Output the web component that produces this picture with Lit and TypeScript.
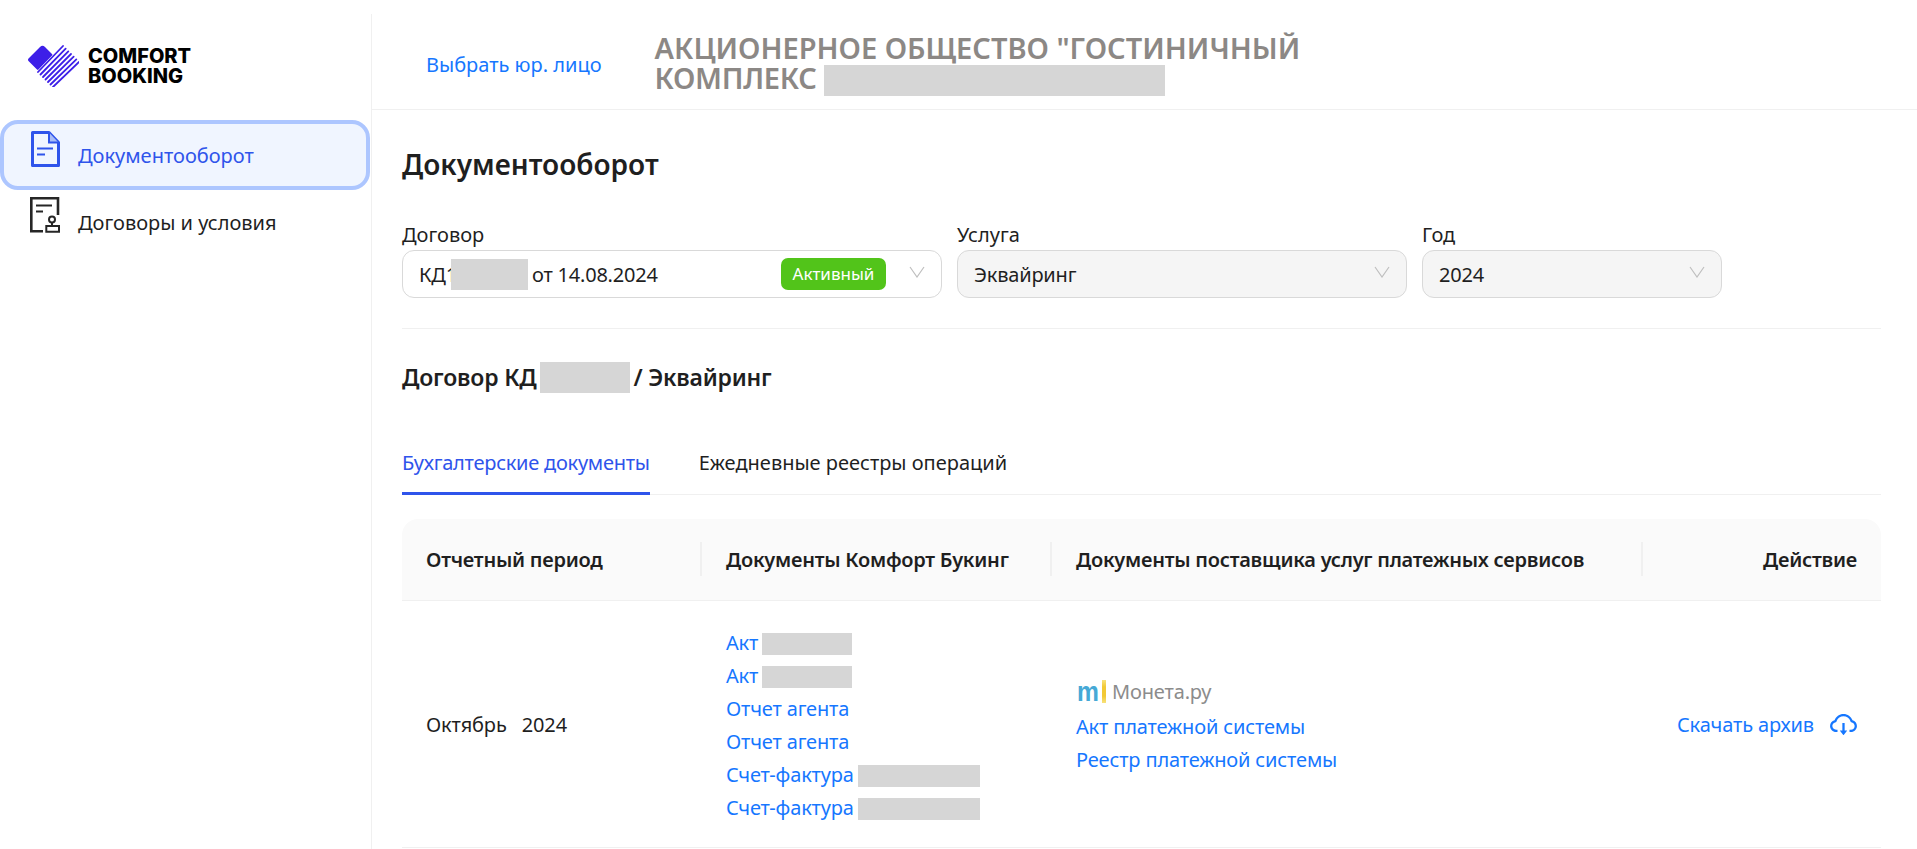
import { LitElement, html, css, svg } from "lit";
import { customElement } from "lit/decorators.js";

const cloudPaths = [
  "M624 706.3h-74.1V464c0-4.4-3.6-8-8-8h-60c-4.4 0-8 3.6-8 8v242.3H400c-6.7 0-10.4 7.7-6.3 12.9l112 141.7a8 8 0 0012.6 0l112-141.7c4.1-5.2.4-12.9-6.3-12.9z",
  "M811.4 366.7C765.6 245.9 648.9 160 512.2 160S258.8 245.8 213 366.6C127.3 389.1 64 467.2 64 560c0 110.5 89.5 200 199.9 200H304c4.4 0 8-3.6 8-8v-60c0-4.4-3.6-8-8-8h-40.1c-33.7 0-65.4-13.4-89-37.7-23.5-24.2-36-56.8-34.9-90.6.9-26.4 9.9-51.2 26.2-72.1 16.7-21.3 40.1-36.8 66.1-43.7l37.9-9.9 13.9-36.6c8.6-22.8 20.6-44.1 35.7-63.4a245.6 245.6 0 0152.4-49.9c41.1-28.9 89.5-44.2 140-44.2s98.9 15.3 140 44.2c19.9 14 37.5 30.8 52.4 49.9 15.1 19.3 27.1 40.6 35.7 63.4l13.8 36.5 37.8 10C846.1 454.5 884 503.8 884 560c0 33.1-12.9 64.3-36.3 87.7a123.07 123.07 0 01-87.6 36.3H720c-4.4 0-8 3.6-8 8v60c0 4.4 3.6 8 8 8h40.1C870.5 760 960 670.5 960 560c0-92.7-63.1-170.7-148.6-193.3z",
];

// stripes of the right lobe, spaced evenly across the rotated rectangle
const stripes = [0, 1, 2, 3, 4, 5, 6].map((i) => {
  const t = i / 6;
  return { x1: 11 + 15 * t, y1: 27 + 15 * t, x2: 36 + 16 * t, y2: 1 + 16 * t };
});

const chevron = html`<svg class="chevron" viewBox="0 0 16 12" width="16" height="12" fill="none" stroke="#bfbfbf" stroke-width="1.2">
  <path d="M1 1l7 10 7-10" />
</svg>`;

@customElement("app-root")
export class AppRoot extends LitElement {
  static styles = css`
    :host {
      display: flex;
      height: 849px;
      overflow: hidden;
      background: #fff;
      color: #1f1f1f;
      font-family: "Noto Sans", "Open Sans", sans-serif;
      font-size: 20px;
    }

    .redact {
      display: inline-block;
      background: #d6d6d6;
      vertical-align: middle;
    }

    aside {
      flex: 0 0 372px;
      box-sizing: border-box;
      margin-top: 14px;
      border-right: 1px solid #f0f0f0;
      padding-top: 31px;
    }

    .logo {
      display: flex;
      align-items: center;
      gap: 9px;
      padding-left: 27px;
      height: 42px;
      margin-bottom: 33px;
    }

    .logo-text {
      font-family: Inter, sans-serif;
      font-weight: 800;
      font-size: 20px;
      line-height: 20px;
      color: #000;
    }

    .nav {
      display: flex;
      align-items: center;
      gap: 18px;
      box-sizing: border-box;
      width: 370px;
      height: 64px;
      padding-left: 26px;
      border: 4px solid transparent;
    }

    .nav svg {
      flex: none;
      margin-top: -14px;
    }

    .nav.active {
      height: 70px;
      background: #f0f5ff;
      border-color: #adc6ff;
      border-radius: 18px;
      color: #2f54eb;
    }

    .nav.active svg {
      margin-top: -12px;
    }

    main {
      flex: 1;
      min-width: 0;
    }

    header {
      display: flex;
      align-items: center;
      gap: 53px;
      box-sizing: border-box;
      height: 110px;
      padding: 20px 0 0 54px;
      border-bottom: 1px solid #f0f0f0;
    }

    .link {
      color: #1677ff;
    }

    .org {
      width: 660px;
      font-size: 29px;
      font-weight: 600;
      line-height: 30px;
      color: #8c8885;
    }

    .org .tight {
      letter-spacing: -0.3px;
    }

    .org .redact {
      width: 341px;
      height: 31px;
    }

    .content {
      padding: 0 36px 0 30px;
    }

    h1 {
      margin: 34px 0 0;
      font-size: 28px;
      font-weight: 600;
      line-height: 40px;
    }

    .filters {
      display: grid;
      grid-template-columns: 540px 450px 300px;
      gap: 15px;
      margin-top: 37px;
      padding-bottom: 30px;
      border-bottom: 1px solid #f0f0f0;
    }

    label {
      display: block;
      line-height: 28px;
      margin-bottom: 1px;
    }

    .select {
      display: flex;
      align-items: center;
      box-sizing: border-box;
      height: 48px;
      padding: 0 16px;
      border: 1px solid #d9d9d9;
      border-radius: 12px;
    }

    .select.disabled {
      background: #f5f5f5;
    }

    .select .value {
      display: flex;
      align-items: center;
      flex: 1;
      white-space: nowrap;
      letter-spacing: -0.2px;
    }

    .select .redact {
      width: 77px;
      height: 31px;
      margin: 0 4px 0 -6px;
    }

    .chevron {
      flex: none;
      margin-top: -4px;
    }

    .badge {
      flex: none;
      box-sizing: border-box;
      width: 105px;
      height: 32px;
      margin-right: 23px;
      border-radius: 7px;
      background: #52c41a;
      color: #fff;
      font-size: 17px;
      line-height: 32px;
      text-align: center;
    }

    h2 {
      display: flex;
      align-items: center;
      margin: 32px 0 0;
      font-size: 23px;
      font-weight: 600;
      line-height: 32px;
      letter-spacing: -0.2px;
      white-space: nowrap;
    }

    h2 .redact {
      width: 90px;
      height: 31px;
      margin: 0 4px 0 3px;
    }

    .tabs {
      display: flex;
      gap: 49px;
      margin-top: 48px;
      border-bottom: 1px solid #f0f0f0;
    }

    .tab {
      line-height: 44px;
      padding-bottom: 7px;
      margin-bottom: -1px;
      border-bottom: 3px solid transparent;
    }

    .tab.active {
      color: #2f54eb;
      border-bottom-color: #2f54eb;
      letter-spacing: -0.25px;
    }

    .table {
      display: grid;
      grid-template-columns: 300px 350px 1fr 238px;
      margin-top: 24px;
    }

    .th {
      position: relative;
      box-sizing: border-box;
      height: 82px;
      padding: 0 24px;
      background: #fafafa;
      border-bottom: 1px solid #f0f0f0;
      font-weight: 600;
      line-height: 82px;
      letter-spacing: -0.25px;
      white-space: nowrap;
    }

    .th:first-child {
      border-top-left-radius: 16px;
    }

    .th:nth-child(4) {
      border-top-right-radius: 16px;
      text-align: right;
    }

    .th:not(:nth-child(4))::after {
      content: "";
      position: absolute;
      right: 0;
      top: 23px;
      width: 2px;
      height: 34px;
      background: #f0f0f0;
    }

    .td {
      box-sizing: border-box;
      display: flex;
      flex-direction: column;
      justify-content: center;
      height: 247px;
      padding: 23px 24px 22px;
      border-bottom: 1px solid #f0f0f0;
      line-height: 33px;
      letter-spacing: -0.15px;
      white-space: pre;
    }

    .td .link .redact {
      height: 22px;
      margin-left: 4px;
    }

    .provider {
      padding-left: 24px;
    }

    .moneta {
      display: flex;
      align-items: center;
      height: 37px;
      padding-left: 1px;
      color: #8c8c8c;
    }

    .moneta .m {
      width: 25px;
      font-family: "Liberation Sans", sans-serif;
      font-size: 28px;
      font-weight: 700;
      line-height: 23px;
      color: #46a9d6;
      transform: scaleX(0.88);
      transform-origin: left center;
    }

    .moneta .bar {
      width: 4px;
      height: 23px;
      margin-right: 6px;
      background: linear-gradient(#f8e27c, #f2c935 30%, #f2c935 70%, #f8e27c);
    }

    .action {
      flex-direction: row;
      align-items: center;
      justify-content: flex-end;
      gap: 16px;
      color: #1677ff;
    }
  `;

  render() {
    return html`
      <aside>
        <div class="logo">
          <svg width="52" height="42" viewBox="0 0 52 42">
            <path d="M1.5 13.5L13 2a3.5 3.5 0 015 0l7 7a1 1 0 010 1.5L11.5 24.5a1 1 0 01-1.5 0l-8.500-8.500a2 2 0 010-2.500z" fill="#3d1fe8" />
            ${stripes.map(
              (s) => svg`<line x1=${s.x1} y1=${s.y1} x2=${s.x2} y2=${s.y2} stroke="#3d1fe8" stroke-width="1.8" stroke-linecap="round" />`
            )}
          </svg>
          <div class="logo-text">COMFORT<br />BOOKING</div>
        </div>
        <div class="nav active">
          <svg width="30" height="36" viewBox="0 0 30 36" fill="none" stroke="#2f54eb" stroke-width="3">
            <path d="M2.500 1.500H19L28.500 11.500V34.500H2.500z" stroke-linejoin="round" />
            <path d="M19 1.500V11.500H28.500" fill="#a9bcf7" stroke-width="2" />
            <path d="M7 17.500H23M7 23.500H15" stroke-width="2.200" />
          </svg>
          <span>Документооборот</span>
        </div>
        <div class="nav">
          <svg width="30" height="36" viewBox="0 0 30 36" fill="none" stroke="#262626" stroke-width="2.600">
            <path d="M28 18V1.300H1.300V34.300H13" />
            <path d="M6 8.500H22M6 14.500H13" stroke-width="2.200" />
            <circle cx="22" cy="22.500" r="3" stroke-width="2" />
            <path d="M22 25.500V29M16.300 29H29V34.800H16.300z" stroke-width="2" />
          </svg>
          <span>Договоры и условия</span>
        </div>
      </aside>
      <main>
        <header>
          <span class="link">Выбрать юр. лицо</span>
          <div class="org">АКЦИОНЕРНОЕ ОБЩЕСТВО "ГОСТИНИЧНЫЙ <span class="tight">КОМПЛЕКС </span><span class="redact"></span></div>
        </header>
        <div class="content">
          <h1>Документооборот</h1>
          <div class="filters">
            <div>
              <label>Договор</label>
              <div class="select">
                <span class="value">КД1<span class="redact"></span>от 14.08.2024</span>
                <span class="badge">Активный</span>
                ${chevron}
              </div>
            </div>
            <div>
              <label>Услуга</label>
              <div class="select disabled"><span class="value">Эквайринг</span>${chevron}</div>
            </div>
            <div>
              <label>Год</label>
              <div class="select disabled"><span class="value">2024</span>${chevron}</div>
            </div>
          </div>
          <h2>Договор КД<span class="redact"></span>/ Эквайринг</h2>
          <div class="tabs">
            <div class="tab active">Бухгалтерские документы</div>
            <div class="tab">Ежедневные реестры операций</div>
          </div>
          <div class="table">
            <div class="th">Отчетный период</div>
            <div class="th">Документы Комфорт Букинг</div>
            <div class="th">Документы поставщика услуг платежных сервисов</div>
            <div class="th">Действие</div>
            <div class="td">Октябрь   2024</div>
            <div class="td">
              ${[90, 90].map((w) => this.docLink("Акт", w))}
              <span class="link">Отчет агента</span>
              <span class="link">Отчет агента</span>
              ${[122, 122].map((w) => this.docLink("Счет-фактура", w))}
            </div>
            <div class="td provider">
              <div class="moneta"><span class="m">m</span><span class="bar"></span>Монета.ру</div>
              <span class="link">Акт платежной системы</span>
              <span class="link">Реестр платежной системы</span>
            </div>
            <div class="td action">
              <span>Скачать архив</span>
              <svg width="27" height="21" viewBox="64 160 896 700" fill="#1677ff">
                ${cloudPaths.map((d) => svg`<path d=${d} />`)}
              </svg>
            </div>
          </div>
        </div>
      </main>
    `;
  }

  docLink(label: string, width: number) {
    return html`<span class="link">${label}<span class="redact" style="width:${width}px"></span></span>`;
  }
}
